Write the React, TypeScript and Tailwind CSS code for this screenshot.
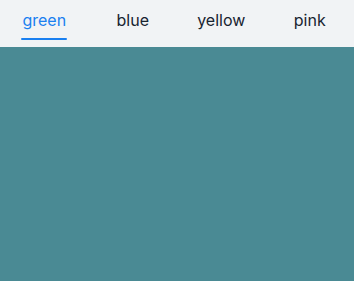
import React from "react";

const tabs = ["green", "blue", "yellow", "pink"];

export default function App() {
  return (
    <div className="w-[354px] h-[281px] bg-[#4a8a94] flex flex-col" style={{ fontFamily: "Inter, 'Noto Sans', sans-serif" }}>
      <div className="h-[47px] bg-[#f1f3f5] flex">
        {tabs.map((t, i) => (
          <div key={t} className="flex-1 flex justify-center pt-[9px]">
            <div className="inline-flex flex-col items-stretch">
              <span className={`text-[16px] leading-[22px] ${i === 0 ? "text-[#1a7ff0]" : "text-[#182431]"}`}>{t}</span>
              {i === 0 && <div className="mt-[7px] h-[2px] rounded-full bg-[#1a7ff0] -mx-[1px]" />}
            </div>
          </div>
        ))}
      </div>
    </div>
  );
}
